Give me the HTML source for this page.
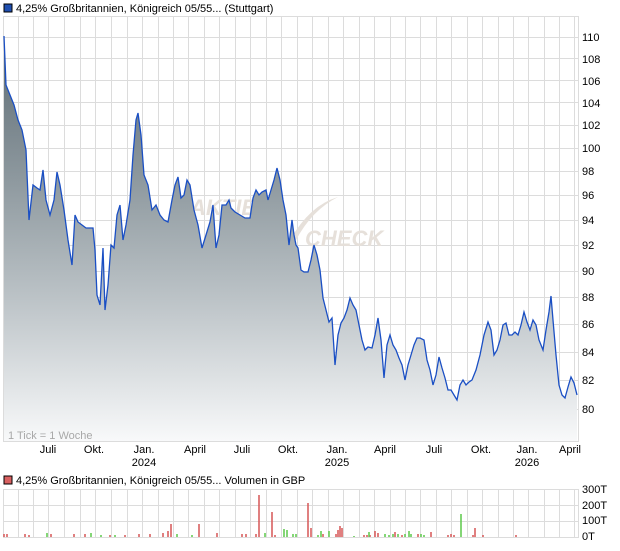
<!DOCTYPE html>
<html><head><meta charset="utf-8"><style>
body{margin:0;width:620px;height:546px;background:#fff;overflow:hidden;font-family:"Liberation Sans",sans-serif}
svg text{font-family:"Liberation Sans",sans-serif;font-size:11px;fill:#000}
</style></head><body>
<svg width="620" height="546" viewBox="0 0 620 546" xmlns="http://www.w3.org/2000/svg">
<defs>
<linearGradient id="g" gradientUnits="userSpaceOnUse" x1="0" y1="36" x2="0" y2="441">
<stop offset="0" stop-color="#5c6a73"/>
<stop offset="0.35" stop-color="#8d989e"/>
<stop offset="0.65" stop-color="#bcc3c7"/>
<stop offset="1" stop-color="#f8f9fa"/>
</linearGradient>
</defs>
<rect x="4" y="4" width="8" height="8" fill="#1f4fb0" stroke="#000" stroke-width="1"/>
<text x="16" y="12">4,25% Großbritannien, Königreich 05/55... (Stuttgart)</text>
<g id="grid" stroke="#dcdcdc" stroke-width="1">
<path d="M3.5 16.5H578.5V441.5H3.5Z" fill="none"/>
<path d="M3 37.5H578M3 58.5H578M3 80.5H578M3 102.5H578M3 125.5H578M3 148.5H578M3 171.5H578M3 195.5H578M3 220.5H578M3 245.5H578M3 271.5H578M3 297.5H578M3 324.5H578M3 352.5H578M3 380.5H578M3 409.5H578"/>
<path d="M18.5 16V441M33.5 16V441M48.5 16V441M64.5 16V441M80.5 16V441M95.5 16V441M111.5 16V441M127.5 16V441M142.5 16V441M158.5 16V441M173.5 16V441M188.5 16V441M204.5 16V441M219.5 16V441M235.5 16V441M250.5 16V441M266.5 16V441M281.5 16V441M297.5 16V441M312.5 16V441M328.5 16V441M343.5 16V441M359.5 16V441M374.5 16V441M390.5 16V441M405.5 16V441M420.5 16V441M436.5 16V441M451.5 16V441M467.5 16V441M482.5 16V441M498.5 16V441M513.5 16V441M528.5 16V441M544.5 16V441M559.5 16V441M574.5 16V441"/>
</g>
<g fill="#e3ddd6" font-style="italic" font-weight="bold">
<text x="190" y="215" style="font-size:22px;fill:#e6e0da;font-style:italic;font-weight:bold">AKTIEN</text>
<text x="305" y="246" style="font-size:22px;fill:#e6e0da;font-style:italic;font-weight:bold">CHECK</text>
<path d="M290 240 Q310 205 338 197 Q312 210 296 240Z" fill="#e6e0da"/>
</g>
<path fill="url(#g)" stroke="none" d="M4 441 L4,36 6,85 10,95 14,105 18,120 22,130 26,150 29,220 33,185 37,188 40,190 43,170 46,200 50,215 54,200 57,172 60,185 64,210 68,240 72,265 75,215 78,222 82,225 86,228 90,228 93,228 95,250 97,295 100,305 103,248 105,310 108,285 111,245 114,248 117,215 120,205 123,240 126,225 130,200 133,155 136,120 138,113 141,135 144,175 148,185 152,210 156,205 160,215 164,220 168,222 172,200 175,185 178,177 181,198 184,195 187,180 190,185 194,210 198,225 202,248 206,235 210,222 213,205 216,248 219,235 222,205 226,205 229,200 231,208 235,212 240,215 245,218 250,218 253,198 256,190 259,195 262,192 266,190 268,200 271,190 274,180 277,168 280,180 283,200 286,215 289,245 292,220 294,235 296,245 298,248 301,270 304,272 308,272 311,260 314,245 317,255 320,270 323,298 326,310 329,322 332,318 335,365 338,335 341,323 344,318 347,310 350,298 353,305 356,310 359,325 362,340 365,350 368,347 372,348 375,335 378,318 381,340 384,378 387,345 390,335 393,345 396,350 399,358 402,365 405,380 408,365 411,355 414,345 417,338 420,338 424,340 427,360 430,370 433,385 436,375 439,357 442,368 445,378 448,390 451,390 454,395 457,400 460,385 463,380 466,385 469,382 472,380 476,370 480,355 484,335 488,322 491,330 494,355 497,350 500,340 503,325 506,323 509,335 512,335 515,332 518,335 521,325 524,312 527,322 530,330 533,320 536,325 539,340 543,350 546,330 549,312 551,296 553,320 556,355 559,385 562,395 565,398 568,387 571,377 574,383 577,395 L577 441Z"/>
<polyline fill="none" stroke="#1a4fc4" stroke-width="1.3" points="4,36 6,85 10,95 14,105 18,120 22,130 26,150 29,220 33,185 37,188 40,190 43,170 46,200 50,215 54,200 57,172 60,185 64,210 68,240 72,265 75,215 78,222 82,225 86,228 90,228 93,228 95,250 97,295 100,305 103,248 105,310 108,285 111,245 114,248 117,215 120,205 123,240 126,225 130,200 133,155 136,120 138,113 141,135 144,175 148,185 152,210 156,205 160,215 164,220 168,222 172,200 175,185 178,177 181,198 184,195 187,180 190,185 194,210 198,225 202,248 206,235 210,222 213,205 216,248 219,235 222,205 226,205 229,200 231,208 235,212 240,215 245,218 250,218 253,198 256,190 259,195 262,192 266,190 268,200 271,190 274,180 277,168 280,180 283,200 286,215 289,245 292,220 294,235 296,245 298,248 301,270 304,272 308,272 311,260 314,245 317,255 320,270 323,298 326,310 329,322 332,318 335,365 338,335 341,323 344,318 347,310 350,298 353,305 356,310 359,325 362,340 365,350 368,347 372,348 375,335 378,318 381,340 384,378 387,345 390,335 393,345 396,350 399,358 402,365 405,380 408,365 411,355 414,345 417,338 420,338 424,340 427,360 430,370 433,385 436,375 439,357 442,368 445,378 448,390 451,390 454,395 457,400 460,385 463,380 466,385 469,382 472,380 476,370 480,355 484,335 488,322 491,330 494,355 497,350 500,340 503,325 506,323 509,335 512,335 515,332 518,335 521,325 524,312 527,322 530,330 533,320 536,325 539,340 543,350 546,330 549,312 551,296 553,320 556,355 559,385 562,395 565,398 568,387 571,377 574,383 577,395"/>
<text x="8" y="439" style="fill:#a8a8a8">1 Tick = 1 Woche</text>
<g>
<text x="582" y="41">110</text><text x="582" y="63">108</text><text x="582" y="85">106</text><text x="582" y="107">104</text><text x="582" y="129">102</text><text x="582" y="152">100</text><text x="582" y="175">98</text><text x="582" y="199">96</text><text x="582" y="224">94</text><text x="582" y="249">92</text><text x="582" y="275">90</text><text x="582" y="301">88</text><text x="582" y="328">86</text><text x="582" y="356">84</text><text x="582" y="384">82</text><text x="582" y="413">80</text>
</g>
<g text-anchor="middle">
<text x="48" y="453">Juli</text><text x="94" y="453">Okt.</text><text x="144" y="453">Jan.</text><text x="144" y="466">2024</text><text x="195" y="453">April</text><text x="242" y="453">Juli</text><text x="288" y="453">Okt.</text><text x="337" y="453">Jan.</text><text x="337" y="466">2025</text><text x="385" y="453">April</text><text x="434" y="453">Juli</text><text x="481" y="453">Okt.</text><text x="527" y="453">Jan.</text><text x="527" y="466">2026</text><text x="570" y="453">April</text>
</g>
<rect x="4" y="476" width="8" height="8" fill="#d96060" stroke="#000" stroke-width="1"/>
<text x="16" y="484">4,25% Großbritannien, Königreich 05/55... Volumen in GBP</text>
<g stroke="#dcdcdc" stroke-width="1" fill="none">
<path d="M3.5 489.5H578.5V537.5H3.5Z"/>
<path d="M3 505.5H578M3 521.5H578"/>
<path d="M18.5 489V537M33.5 489V537M48.5 489V537M64.5 489V537M80.5 489V537M95.5 489V537M111.5 489V537M127.5 489V537M142.5 489V537M158.5 489V537M173.5 489V537M188.5 489V537M204.5 489V537M219.5 489V537M235.5 489V537M250.5 489V537M266.5 489V537M281.5 489V537M297.5 489V537M312.5 489V537M328.5 489V537M343.5 489V537M359.5 489V537M374.5 489V537M390.5 489V537M405.5 489V537M420.5 489V537M436.5 489V537M451.5 489V537M467.5 489V537M482.5 489V537M498.5 489V537M513.5 489V537M528.5 489V537M544.5 489V537M559.5 489V537M574.5 489V537"/>
</g>
<g stroke-width="1.6">
<path stroke="#d96060" d="M4 537V534M7 537V534M25 537V534M29 537V535M51 537V534M74 537V534M85 537V534M110 537V535M125 537V535M139 537V534M150 537V534M163 537V533M168 537V531M171 537V524M199 537V524M217 537V533M242 537V534M246 537V534M256 537V534M259 537V495M272 537V512M275 537V535M308 537V503M311 537V528M323 537V534M336 537V534M338 537V530M340 537V526M342 537V528M364 537V535M367 537V535M370 537V535M375 537V531M378 537V533M395 537V532M402 537V535M418 537V534M431 537V532M448 537V535M451 537V534M454 537V535M473 537V535M475 537V528M483 537V535M516 537V535"/>
<path stroke="#66cc55" d="M47 537V533M91 537V533M101 537V535M115 537V535M177 537V534M192 537V535M265 537V533M284 537V529M287 537V530M293 537V534M296 537V534M318 537V535M321 537V531M329 537V531M354 537V536M369 537V532M385 537V534M389 537V535M393 537V534M398 537V534M405 537V534M409 537V531M411 537V534M421 537V534M424 537V535M461 537V514"/>
</g>
<text x="582" y="493">300T</text><text x="582" y="509">200T</text><text x="582" y="524">100T</text><text x="582" y="540">0T</text>
</svg>
</body></html>
